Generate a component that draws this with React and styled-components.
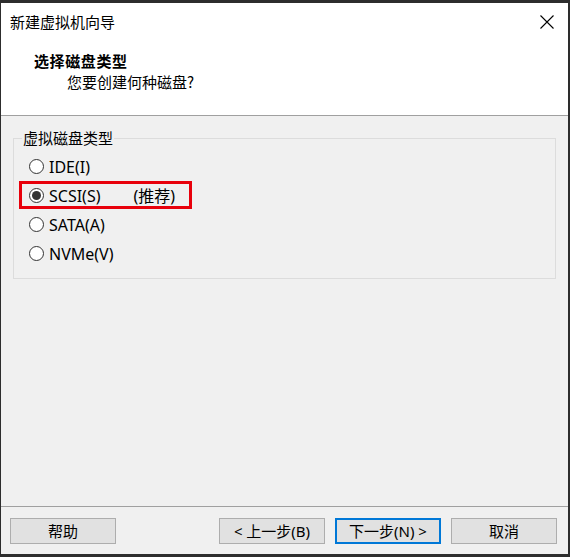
import React from 'react';
import styled, { createGlobalStyle } from 'styled-components';

const GlobalStyle = createGlobalStyle`
  html, body {
    margin: 0;
    padding: 0;
    background: #2d2d2d;
  }
  * {
    box-sizing: border-box;
  }
`;

const uiFont = `"Noto Sans", "Noto Sans CJK SC", sans-serif`;

const Window = styled.div`
  width: 570px;
  height: 557px;
  display: flex;
  flex-direction: column;
  border-style: solid;
  border-color: #2d2d2d;
  border-width: 3px 2px 3px 1px;
  background: #f0f0f0;
  font-family: ${uiFont};
  color: #000;
`;

const TitleBar = styled.div`
  height: 38px;
  display: flex;
  align-items: center;
  justify-content: space-between;
  padding-left: 9px;
  background: #fff;
  font-size: 15px;
  line-height: 20px;
`;

const CloseButton = styled.div`
  width: 46px;
  height: 38px;
  display: flex;
  align-items: center;
  justify-content: center;
  padding-left: 4px;
`;

const Header = styled.div`
  background: #fff;
  padding: 10px 0 23px 33px;
  border-bottom: 1px solid #a0a0a0;
`;

const Heading = styled.div`
  font-family: "Noto Sans CJK SC", sans-serif;
  font-size: 15px;
  font-weight: bold;
  letter-spacing: 0.6px;
  line-height: 20px;
`;

const Subtitle = styled.div`
  margin-top: 1px;
  padding-left: 33px;
  font-family: "Noto Sans CJK SC", sans-serif;
  font-size: 15px;
  line-height: 20px;
`;

const Body = styled.div`
  flex: 1;
  padding: 12px 12px 0;
`;

const GroupBox = styled.fieldset`
  margin: 0;
  padding: 4px 0 10px 5px;
  border: 1px solid #dcdcdc;
  min-width: 0;
`;

const Legend = styled.legend`
  margin-left: 3px;
  padding: 0 1px;
  font-size: 15px;
  line-height: 20px;
`;

const Option = styled.div`
  position: relative;
  display: flex;
  align-items: center;
  height: 29px;
  padding-left: 10px;
  font-size: 16px;
  line-height: 20px;
  width: ${p => (p.$marked ? '173px' : 'auto')};

  ${p => p.$marked && `
    &::after {
      content: '';
      position: absolute;
      left: 0;
      right: 0;
      top: 0;
      bottom: 1px;
      border: 3px solid #e8000b;
    }
  `}
`;

const Radio = styled.span`
  width: 15px;
  height: 15px;
  border-radius: 50%;
  border: 1px solid #333;
  background: #fff;
  display: flex;
  align-items: center;
  justify-content: center;
  margin-right: 5px;
  flex-shrink: 0;

  &::before {
    content: '';
    width: 9px;
    height: 9px;
    border-radius: 50%;
    background: ${p => (p.$checked ? '#333' : 'transparent')};
  }
`;

const Note = styled.span`
  margin-left: 33px;
`;

const Footer = styled.div`
  display: flex;
  align-items: center;
  gap: 10px;
  padding: 11px 11px 10px 9px;
  border-top: 1px solid #a0a0a0;
`;

const Button = styled.div`
  width: 106px;
  height: 26px;
  display: flex;
  align-items: center;
  justify-content: center;
  background: #e1e1e1;
  border: ${p => (p.$default ? '2px solid #0078d7' : '1px solid #adadad')};
  font-size: 15px;
  line-height: 20px;
  margin-left: ${p => (p.$push ? 'auto' : '0')};
`;

const options = [
  { label: 'IDE(I)' },
  { label: 'SCSI(S)', checked: true, note: '(推荐)' },
  { label: 'SATA(A)' },
  { label: 'NVMe(V)' },
];

const CloseIcon = () => (
  <svg width="14" height="14" viewBox="0 0 14 14">
    <path d="M0.5 0.5 L13.5 13.5 M13.5 0.5 L0.5 13.5" stroke="#000" strokeWidth="1.1" fill="none" />
  </svg>
);

const App = () => (
  <>
    <GlobalStyle />
    <Window>
      <TitleBar>
        <span>新建虚拟机向导</span>
        <CloseButton>
          <CloseIcon />
        </CloseButton>
      </TitleBar>
      <Header>
        <Heading>选择磁盘类型</Heading>
        <Subtitle>您要创建何种磁盘?</Subtitle>
      </Header>
      <Body>
        <GroupBox>
          <Legend>虚拟磁盘类型</Legend>
          {options.map(o => (
            <Option key={o.label} $marked={o.checked}>
              <Radio $checked={o.checked} />
              {o.label}
              {o.note && <Note>{o.note}</Note>}
            </Option>
          ))}
        </GroupBox>
      </Body>
      <Footer>
        <Button>帮助</Button>
        <Button $push>&lt; 上一步(B)</Button>
        <Button $default>下一步(N) &gt;</Button>
        <Button>取消</Button>
      </Footer>
    </Window>
  </>
);

export default App;
